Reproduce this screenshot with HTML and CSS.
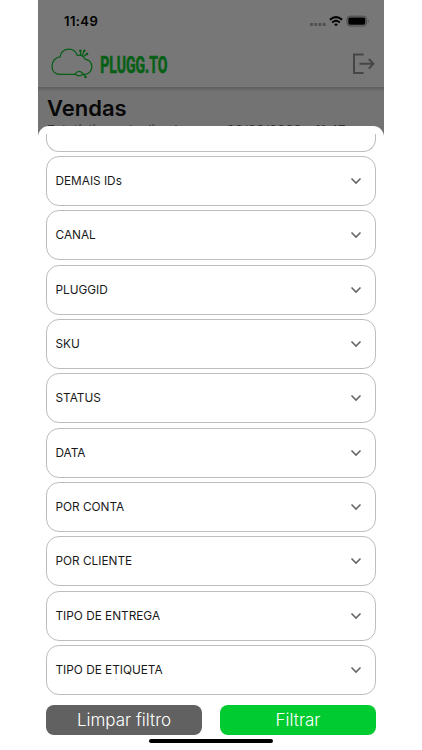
FILE: index.html
```html
<!DOCTYPE html>
<html lang="pt-BR">
<head>
<meta charset="utf-8">
<title>Plugg.to - Vendas</title>
<link rel="stylesheet" href="styles.css">
</head>
<body>
<main class="phone">
  <header class="top">
    <div class="status">
      <span class="time">11:49</span>
      <svg class="indicators" width="62" height="14" viewBox="0 0 62 14">
        <g fill="#505050"><rect x="1" y="8" width="3" height="3" rx=".8"/><rect x="5.2" y="8" width="3" height="3" rx=".8"/><rect x="9.4" y="8" width="3" height="3" rx=".8"/><rect x="13.6" y="8" width="3" height="3" rx=".8"/></g>
        <g fill="none" stroke="#000" stroke-width="2"><path d="M20.9 4.7Q27 -.5 33.1 4.7"/><path d="M23.2 7.4Q27 4.2 30.8 7.4"/></g>
        <path d="M25.1 9.2Q27 7.9 28.9 9.2L27 11.3Z"/>
        <rect x="38" y="1.2" width="19.6" height="9.8" rx="3" fill="none" stroke="#484848"/>
        <rect x="39.3" y="2.5" width="17" height="7.2" rx="1.6"/><path d="M59 4.2q1.6 1.9 0 3.8z" fill="#484848"/>
      </svg>
    </div>
    <div class="brand">
      <svg class="logo" width="130" height="34" viewBox="0 0 130 34">
        <g fill="none" stroke="#075f16" stroke-width="1.25" stroke-linecap="round">
          <path d="M24 28.3H9.2C3.8 28.3 1 24.8 1 20.2C1 15 4.6 11.3 9.1 10.8C9.5 6 13.3 3.2 17.8 3.2C21.8 3.2 25 5.6 26.2 9.4C29.6 8.4 32.5 9.8 34 13.2C38.3 14 40.8 17.2 40.8 20.9C40.8 24.7 38 27.8 34.5 28.3H32"/>
          <path d="M24 28Q28 22.6 32.4 28Q28 31.6 24 28ZM32.4 28L34.5 31"/>
          <path d="M29.7 9L29.5 5.2M31.3 9.2L33 5.2M32.8 10.3L35.6 8.2"/>
        </g>
        <g fill="#075f16"><circle cx="29.4" cy="4.8" r="1.3"/><circle cx="33.3" cy="4.8" r="1.3"/><circle cx="36" cy="8" r="1.3"/><circle cx="34.6" cy="31" r="1.3"/></g>
        <text class="wordmark" x="49.3" y="26.5" textLength="67" lengthAdjust="spacingAndGlyphs">PLUGG.TO</text>
      </svg>
      <svg class="exit" width="24" height="24" viewBox="0 0 24 24" fill="none" stroke="#464646" stroke-width="2"><path d="M11.6 2.5H2V21H11.6M7.5 11.8H21M16.8 7L21.4 11.8L16.8 16.6"/></svg>
    </div>
  </header>
  <section class="page">
    <h1>Vendas</h1>
    <p><span>Estatísticas atualizadas em: </span><span>08/08/2022 - 11:47</span></p>
  </section>
  <section class="sheet">
    <div class="list">
      <div class="card cut"></div>
      <div class="card">DEMAIS IDs<svg class="chev" viewBox="0 0 12 8"><path d="M1.5 1.5L6 6L10.5 1.5"/></svg></div>
      <div class="card">CANAL<svg class="chev" viewBox="0 0 12 8"><path d="M1.5 1.5L6 6L10.5 1.5"/></svg></div>
      <div class="card">PLUGGID<svg class="chev" viewBox="0 0 12 8"><path d="M1.5 1.5L6 6L10.5 1.5"/></svg></div>
      <div class="card">SKU<svg class="chev" viewBox="0 0 12 8"><path d="M1.5 1.5L6 6L10.5 1.5"/></svg></div>
      <div class="card">STATUS<svg class="chev" viewBox="0 0 12 8"><path d="M1.5 1.5L6 6L10.5 1.5"/></svg></div>
      <div class="card">DATA<svg class="chev" viewBox="0 0 12 8"><path d="M1.5 1.5L6 6L10.5 1.5"/></svg></div>
      <div class="card">POR CONTA<svg class="chev" viewBox="0 0 12 8"><path d="M1.5 1.5L6 6L10.5 1.5"/></svg></div>
      <div class="card">POR CLIENTE<svg class="chev" viewBox="0 0 12 8"><path d="M1.5 1.5L6 6L10.5 1.5"/></svg></div>
      <div class="card">TIPO DE ENTREGA<svg class="chev" viewBox="0 0 12 8"><path d="M1.5 1.5L6 6L10.5 1.5"/></svg></div>
      <div class="card">TIPO DE ETIQUETA<svg class="chev" viewBox="0 0 12 8"><path d="M1.5 1.5L6 6L10.5 1.5"/></svg></div>
    </div>
    <div class="actions">
      <button class="clear">Limpar filtro</button>
      <button class="apply">Filtrar</button>
    </div>
    <div class="home"></div>
  </section>
</main>
</body>
</html>
```
FILE: styles.css
```css
* { box-sizing: border-box; }
body { margin: 0; background: #fff; font-family: Inter, "Liberation Sans", sans-serif; }
.phone { width: 346px; height: 750px; margin-left: 38px; overflow: hidden; background: #737373; display: flex; flex-direction: column; }
.top { height: 87px; flex: none; background: #777; }
.status { height: 42px; padding: 14px 14px 0 26px; display: flex; justify-content: space-between; }
.time { font-size: 13px; font-weight: 600; line-height: 14px; letter-spacing: .4px; }
.indicators { margin: 1px -1px 0 0; }
.brand { height: 45px; padding: 4px 8px 0 13px; display: flex; justify-content: space-between; }
.logo { overflow: visible; }
.wordmark { font: 700 23px Roboto, sans-serif; fill: #075f16; stroke: #075f16; stroke-width: .7px; }
.exit { margin-top: 6px; }
.page { height: 39px; flex: none; padding: 7px 9px 0; background: linear-gradient(#5d5d5d, #6c6c6c 3px, #737373 5px); overflow: hidden; }
h1 { margin: 0; font-size: 22px; line-height: 29px; font-weight: 600; color: #080808; }
.page p { margin: 0; display: flex; gap: 8px; font-size: 13.2px; line-height: 14px; color: #303030; white-space: nowrap; }
.sheet { flex: 1; padding: 8px 8px 0; background: #fff; border-radius: 11px 11px 0 0; box-shadow: 0 14px 0 #737373; position: relative; display: flex; flex-direction: column; }
.list { height: 561.5px; flex: none; overflow: hidden; display: flex; flex-direction: column; gap: 4.35px; }
.card { height: 50px; flex: none; padding: 0 13px 0 8.5px; border: 1px solid #bdbdbd; border-radius: 13px; display: flex; align-items: center; justify-content: space-between; font-size: 11.8px; color: #191919; }
.cut { height: 17.6px; border-top: 0; border-radius: 0 0 13px 13px; }
.chev { width: 12px; height: 8px; fill: none; stroke: #666; stroke-width: 1.6; }
.actions { display: flex; gap: 18px; margin-top: 9px; }
button { flex: 1; height: 30.5px; border: 0; border-radius: 8px; padding: 0; font: 300 17px Inter, sans-serif; color: #fff; }
.clear { background: #616161; }
.apply { background: #00cb30; }
.home { width: 124px; height: 4px; margin: 3.5px auto 0; border-radius: 2px; background: #000; }
```
